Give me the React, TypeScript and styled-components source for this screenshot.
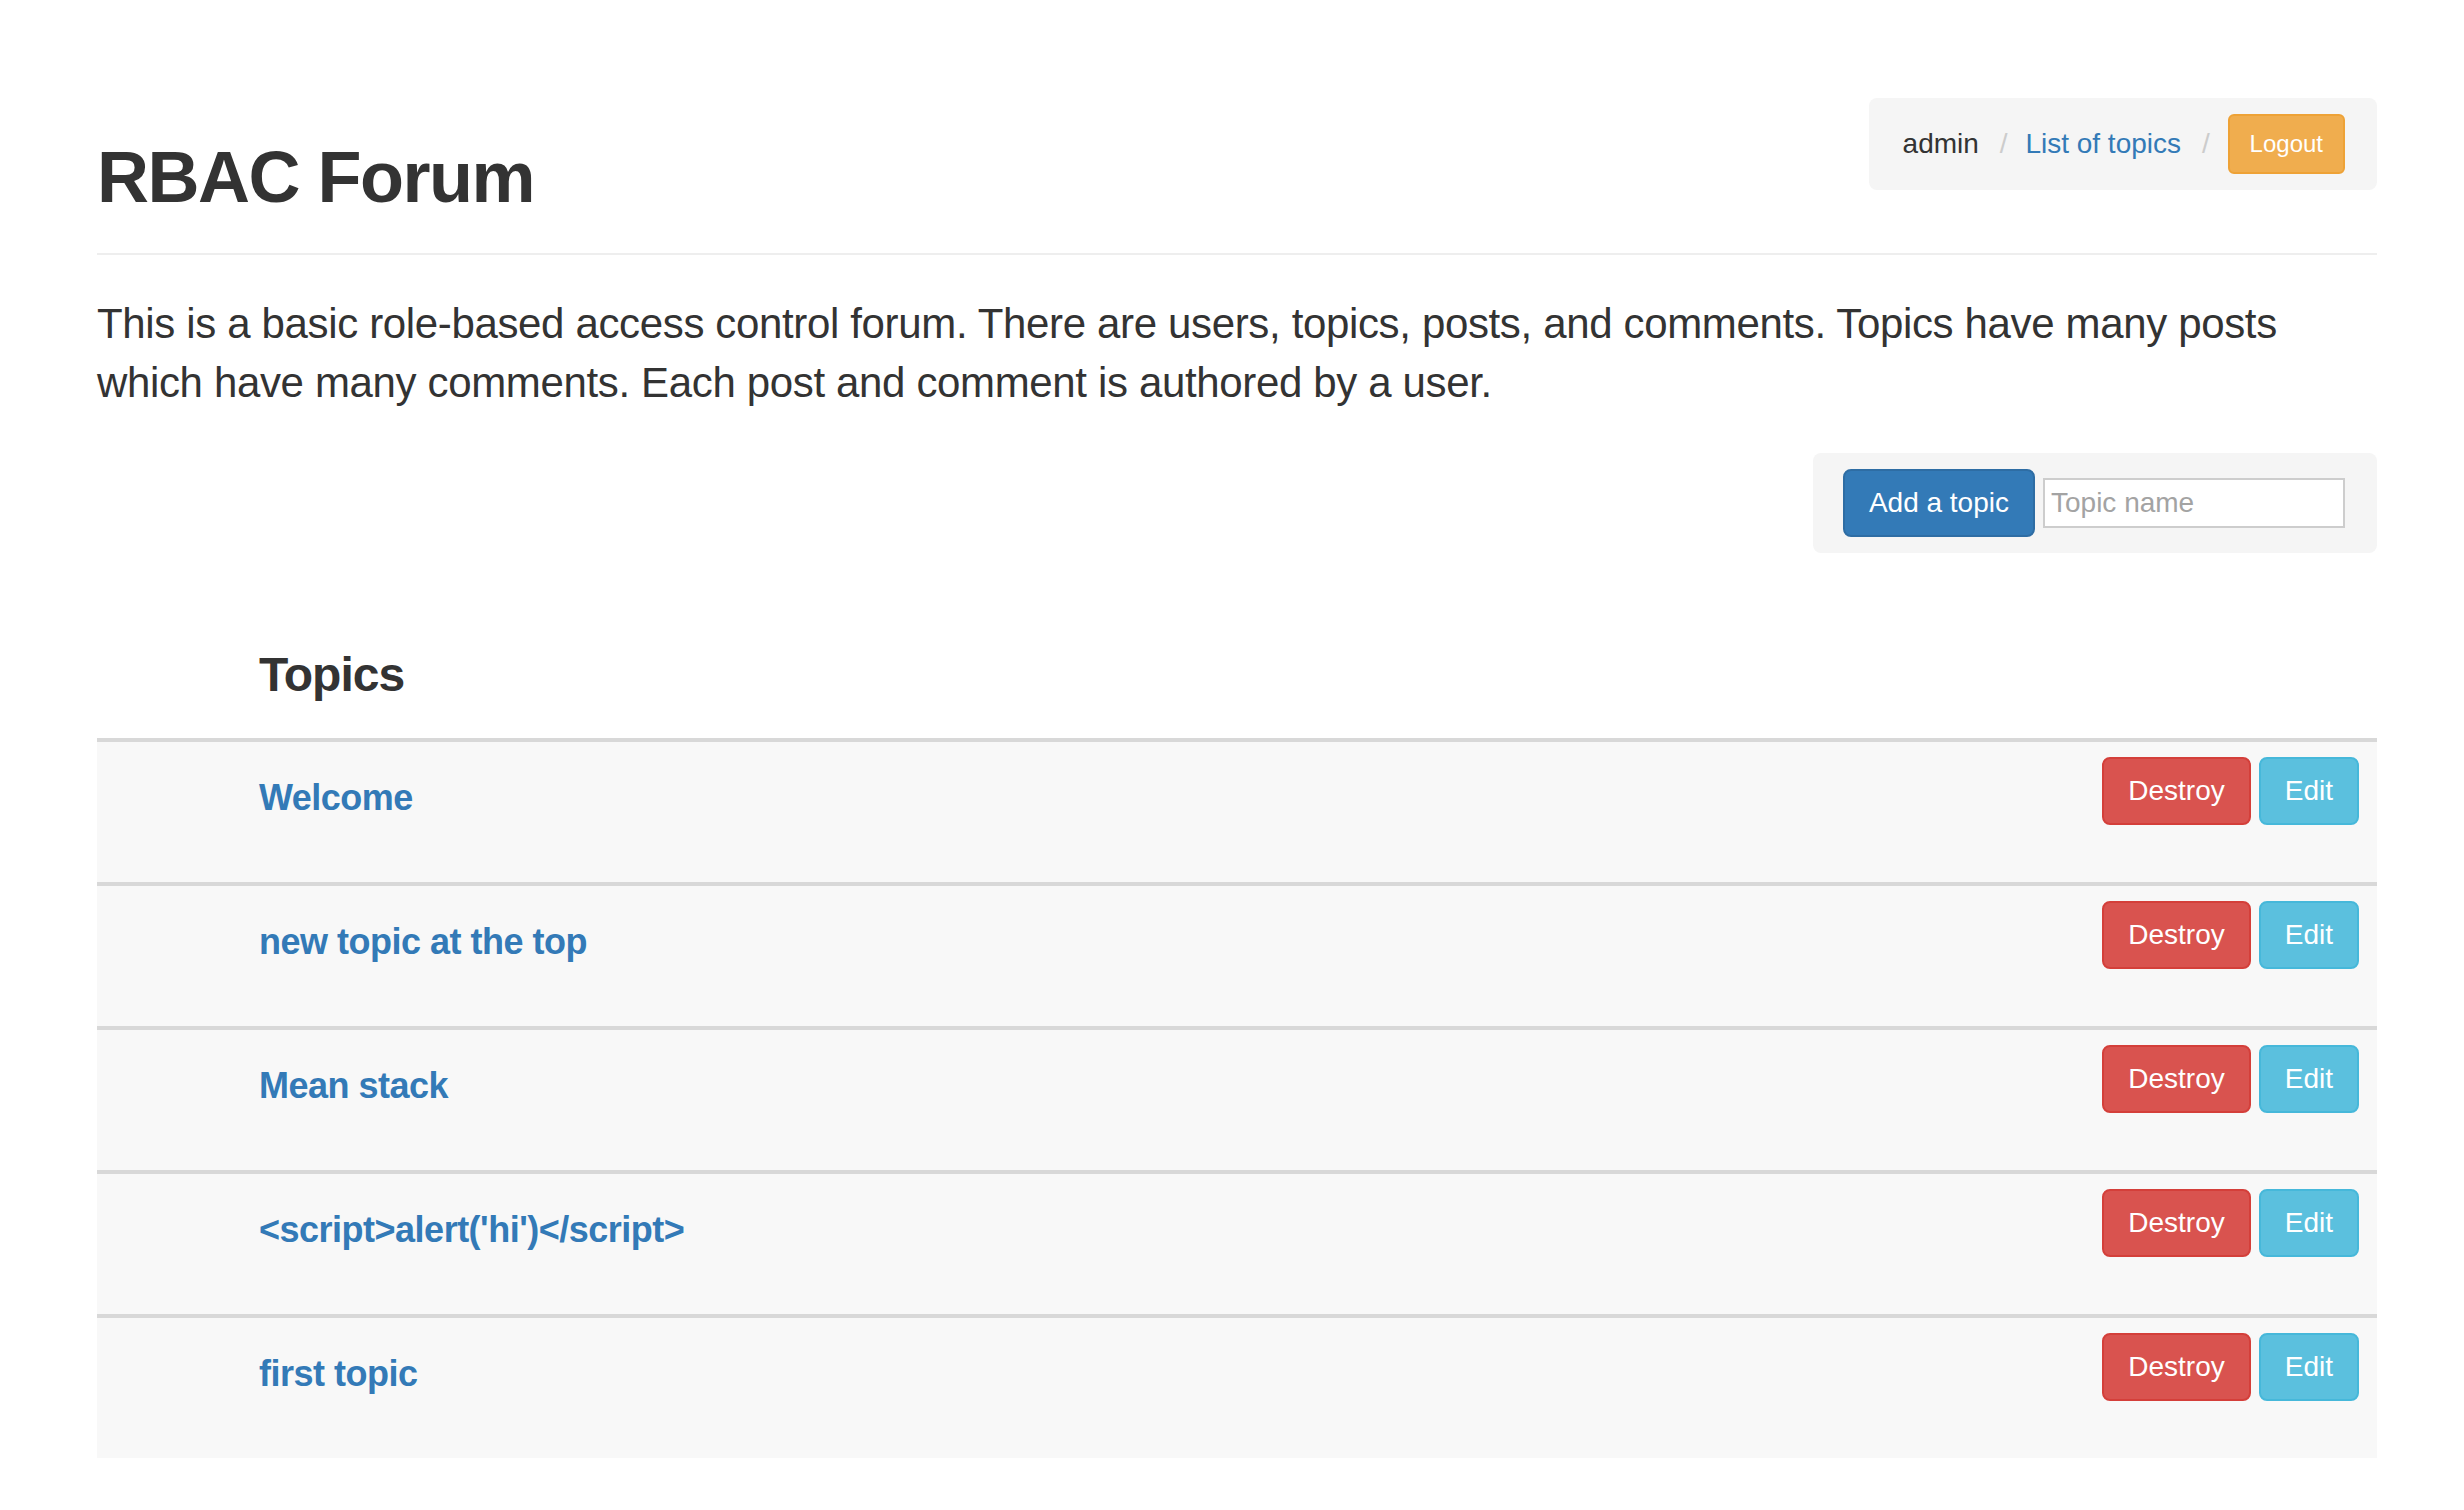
import React from "react";
import styled, { createGlobalStyle, css } from "styled-components";

const GlobalStyle = createGlobalStyle`
  html, body {
    margin: 0;
    padding: 0;
    background: #fff;
  }
  body {
    font-family: "Liberation Sans", Arial, sans-serif;
    font-size: 28px;
    line-height: 40px;
    color: #333;
  }
  *, *::before, *::after {
    box-sizing: border-box;
  }
`;

type Variant = "primary" | "danger" | "info" | "warning";

const palette: Record<Variant, { bg: string; border: string }> = {
  primary: { bg: "#337ab7", border: "#2e6da4" },
  danger: { bg: "#d9534f", border: "#d43f3a" },
  info: { bg: "#5bc0de", border: "#46b8da" },
  warning: { bg: "#f0ad4e", border: "#eea236" },
};

const topics = [
  "Welcome",
  "new topic at the top",
  "Mean stack",
  "<script>alert('hi')</script>",
  "first topic",
];

export default function App() {
  return (
    <>
      <GlobalStyle />
      <Page>
        <PageHeader>
          <Title>RBAC Forum</Title>
          <Breadcrumb>
            <Crumb>admin</Crumb>
            <Crumb>
              <CrumbLink href="#">List of topics</CrumbLink>
            </Crumb>
            <Crumb>
              <Button $variant="warning" $small type="button">
                Logout
              </Button>
            </Crumb>
          </Breadcrumb>
        </PageHeader>

        <Lead>
          This is a basic role-based access control forum. There are users,
          topics, posts, and comments. Topics have many posts which have many
          comments. Each post and comment is authored by a user.
        </Lead>

        <AddTopicRow>
          <AddTopicForm onSubmit={(e) => e.preventDefault()}>
            <Button $variant="primary" type="submit">
              Add a topic
            </Button>
            <TopicInput placeholder="Topic name" />
          </AddTopicForm>
        </AddTopicRow>

        <TopicsHeading>Topics</TopicsHeading>
        <TopicList>
          {topics.map((topic) => (
            <TopicRow key={topic}>
              <TopicName>
                <TopicLink href="#">{topic}</TopicLink>
              </TopicName>
              <Actions>
                <Button $variant="danger" type="button">
                  Destroy
                </Button>
                <Button $variant="info" type="button">
                  Edit
                </Button>
              </Actions>
            </TopicRow>
          ))}
        </TopicList>
      </Page>
    </>
  );
}

const Page = styled.div`
  width: 2280px;
  margin: 0 87px 0 97px;
  padding: 96px 0 40px;
`;

const PageHeader = styled.header`
  display: flex;
  justify-content: space-between;
  align-items: flex-start;
  padding-bottom: 18px;
  border-bottom: 2px solid #eee;
  margin-bottom: 40px;
`;

const Title = styled.h1`
  margin: 42px 0 18px;
  font-size: 72px;
  line-height: 79px;
  font-weight: 700;
  letter-spacing: -1.5px;
  color: #333;
`;

const Breadcrumb = styled.ol`
  display: flex;
  align-items: center;
  gap: 11px;
  list-style: none;
  margin: 2px 0 0;
  padding: 16px 32px 16px 34px;
  background: #f5f5f5;
  border-radius: 8px;
`;

const Crumb = styled.li`
  display: flex;
  align-items: center;
  color: #333;

  & + &::before {
    content: "/\\00a0";
    padding: 0 10px;
    color: #ccc;
  }
`;

const CrumbLink = styled.a`
  color: #337ab7;
  text-decoration: none;
`;

const Button = styled.button<{ $variant: Variant; $small?: boolean }>`
  font-family: inherit;
  font-weight: 400;
  color: #fff;
  cursor: pointer;
  white-space: nowrap;
  border: 2px solid ${({ $variant }) => palette[$variant].border};
  background: ${({ $variant }) => palette[$variant].bg};
  ${({ $small }) =>
    $small
      ? css`
          font-size: 24px;
          line-height: 36px;
          padding: 10px 20px;
          border-radius: 6px;
        `
      : css`
          font-size: 28px;
          line-height: 40px;
          padding: 12px 24px;
          border-radius: 8px;
        `}
`;

const Lead = styled.p`
  margin: 0 0 40px;
  font-size: 42px;
  line-height: 58.8px;
  font-weight: 300;
  letter-spacing: -0.35px;
`;

const AddTopicRow = styled.div`
  display: flex;
  justify-content: flex-end;
`;

const AddTopicForm = styled.form`
  display: flex;
  align-items: center;
  gap: 8px;
  margin: 0;
  padding: 16px 32px 16px 30px;
  background: #f5f5f5;
  border-radius: 8px;
`;

const TopicInput = styled.input`
  width: 302px;
  height: 50px;
  padding: 0 6px;
  font-family: inherit;
  font-size: 28px;
  color: #333;
  background: #fff;
  border: 2px solid #cdcdcd;
  outline: none;

  &::placeholder {
    color: #a3a3a3;
  }
`;

const TopicsHeading = styled.h3`
  margin: 95px 0 0;
  padding: 0 0 37px 162px;
  font-size: 48px;
  line-height: 53px;
  font-weight: 700;
  letter-spacing: -1px;
  color: #333;
`;

const TopicList = styled.ul`
  list-style: none;
  margin: 0;
  padding: 0;
`;

const TopicRow = styled.li`
  display: flex;
  justify-content: space-between;
  align-items: flex-start;
  height: 144px;
  padding: 15px 18px 0 162px;
  border-top: 4px solid #d8d8d8;
  background: #f8f8f8;
`;

const TopicName = styled.h4`
  margin: 21px 0 0;
  font-size: 36px;
  line-height: 40px;
  font-weight: 700;
  letter-spacing: -0.5px;
`;

const TopicLink = styled.a`
  color: #337ab7;
  text-decoration: none;
`;

const Actions = styled.div`
  display: flex;
  gap: 8px;
`;
